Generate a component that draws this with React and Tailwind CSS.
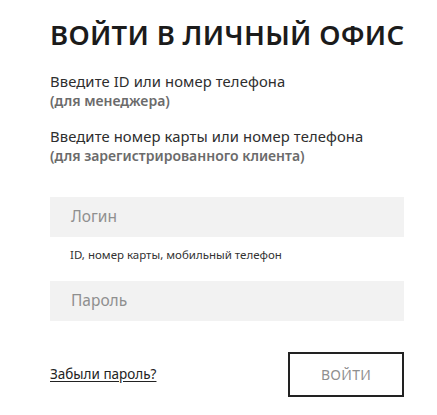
export default function App() {
  return (
    <div className="w-[437px] h-[415px] bg-white pl-[50px] pt-[20px]" style={{ fontFamily: '"Noto Sans", sans-serif' }}>
      <div className="w-[354px]">
        <h1 className="text-[27.5px] leading-[30px] font-semibold text-[#1b1b1b] tracking-[0.3px] whitespace-nowrap">ВОЙТИ В ЛИЧНЫЙ ОФИС</h1>
        <div className="mt-[21px] text-[14.8px] leading-[20px] text-[#2e2e2e] tracking-[0.1px]">Введите ID или номер телефона</div>
        <div className="text-[14px] leading-[20px] font-semibold text-[#6b6b6b]">(для менеджера)</div>
        <div className="mt-[15px] text-[14.8px] leading-[20px] text-[#2e2e2e] tracking-[0.1px]">Введите номер карты или номер телефона</div>
        <div className="text-[14px] leading-[20px] font-semibold text-[#6b6b6b]">(для зарегистрированного клиента)</div>
        <div className="mt-[31px] h-[40px] bg-[#f2f2f2] flex items-center pl-[21px] text-[15.5px] text-[#8f8f8f]">Логин</div>
        <div className="mt-[10px] pl-[20px] text-[11.5px] leading-[16px] text-[#333]">ID, номер карты, мобильный телефон</div>
        <div className="mt-[18px] h-[40px] bg-[#f2f2f2] flex items-center pl-[21px] text-[15.5px] text-[#8f8f8f]">Пароль</div>
        <div className="mt-[31px] flex items-center justify-between">
          <a className="text-[13.5px] text-[#222] underline underline-offset-2">Забыли пароль?</a>
          <button className="w-[116px] h-[45px] border-2 border-[#222] text-[14px] text-[#8f8f8f] tracking-[0.3px]">ВОЙТИ</button>
        </div>
      </div>
    </div>
  );
}
